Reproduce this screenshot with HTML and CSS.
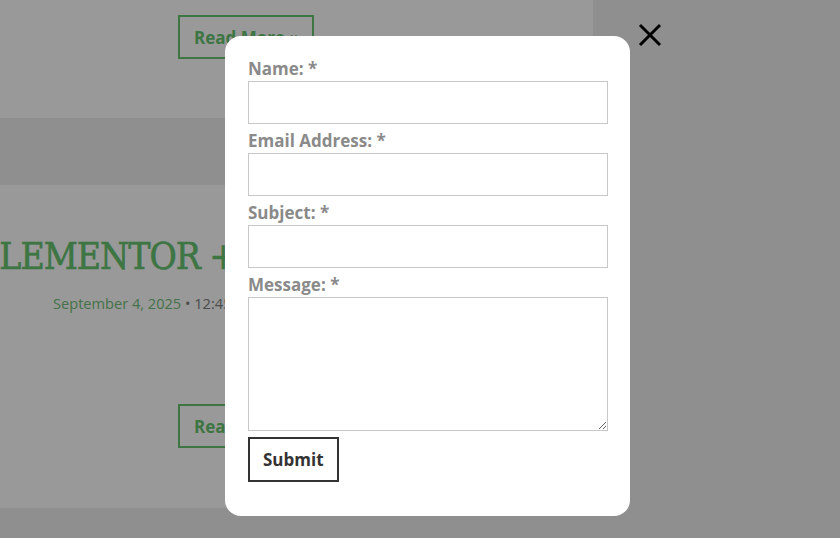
FILE: index.html
```html
<!DOCTYPE html>
<html lang="en">
<head>
  <meta charset="UTF-8">
  <title>Contact</title>
  <link rel="stylesheet" href="styles.css">
</head>
<body>
  <div class="posts">
    <article class="post post-top">
      <a class="read-more" href="#">Read More »</a>
    </article>
    <article class="post">
      <h2 class="post-title">ELEMENTOR + WOOCOMMERCE</h2>
      <p class="post-meta"><span class="date">September 4, 2025</span> • 12:45 pm</p>
      <a class="read-more" href="#">Read More »</a>
    </article>
  </div>

  <div class="overlay"></div>

  <!-- popup form -->
  <div class="modal">
    <form class="contact-form">
      <label for="f-name">Name: *</label>
      <input type="text" id="f-name">
      <label for="f-email">Email Address: *</label>
      <input type="email" id="f-email">
      <label for="f-subject">Subject: *</label>
      <input type="text" id="f-subject">
      <label for="f-message">Message: *</label>
      <textarea id="f-message"></textarea>
      <button type="button" class="submit">Submit</button>
    </form>
  </div>

  <button class="close" type="button" aria-label="Close">
    <svg width="24" height="24" viewBox="0 0 24 24"><path d="M2 2 L22 22 M22 2 L2 22" stroke="#000" stroke-width="3" fill="none"/></svg>
  </button>
</body>
</html>
```

FILE: styles.css
```css
* { box-sizing: border-box; }
html, body { margin: 0; height: 100%; overflow: hidden; }
body { background: #eeeeee; font-family: "Open Sans", "Noto Sans", sans-serif; }

.posts { width: 593px; }
.post { background: #fff; padding: 50px 0 60px; }
.post-top { padding: 15px 0 59px; margin-bottom: 67px; }

.post-title {
  margin: 0 0 0 -24px;
  font-family: "DejaVu Serif Condensed", "DejaVu Serif", serif;
  font-weight: normal;
  font-size: 37px;
  line-height: 44px;
  letter-spacing: -1px;
  color: #67c371;
  -webkit-text-stroke: 0.6px #67c371;
  white-space: nowrap;
}
.post-meta {
  margin: 13px 0 0;
  padding-left: 53px;
  font-family: "Open Sans", sans-serif;
  font-size: 14.6px;
  line-height: 22px;
  color: #808080;
}
.post-meta .date { color: #72c07a; }

.read-more {
  display: block;
  width: 136px;
  height: 44px;
  margin-left: 178px;
  padding: 0 14px;
  border: 2px solid #67c371;
  color: #67c371;
  font-weight: 700;
  font-size: 17px;
  line-height: 41px;
  text-decoration: none;
  white-space: nowrap;
}
.post .read-more { margin-top: 90px; }
.post-top .read-more { margin-top: 0; }

.overlay { position: fixed; inset: 0; background: rgba(0, 0, 0, .4); }

.modal {
  position: fixed;
  left: 225px;
  top: 36px;
  width: 405px;
  background: #fff;
  border-radius: 16px;
  padding: 21px 22px 34px 23px;
}
.contact-form { display: flex; flex-direction: column; align-items: flex-start; }
.contact-form label {
  display: block;
  font-size: 17px;
  font-weight: 700;
  line-height: 24px;
  color: #8a8a8a;
}
.contact-form input,
.contact-form textarea {
  display: block;
  width: 360px;
  height: 43px;
  margin: 0 0 5px;
  border: 1px solid #c8c8c8;
  border-radius: 0;
  background: #fff;
  font: inherit;
}
.contact-form textarea { height: 134px; margin-bottom: 6px; resize: both; }

.submit {
  height: 45px;
  padding: 0 13px;
  background: #fff;
  border: 2px solid #333;
  color: #333;
  font-family: inherit;
  font-size: 17px;
  font-weight: 700;
}

.close {
  position: fixed;
  left: 638px;
  top: 23px;
  padding: 0;
  border: 0;
  background: none;
  width: 24px;
  height: 24px;
}
.close svg { display: block; }
```
